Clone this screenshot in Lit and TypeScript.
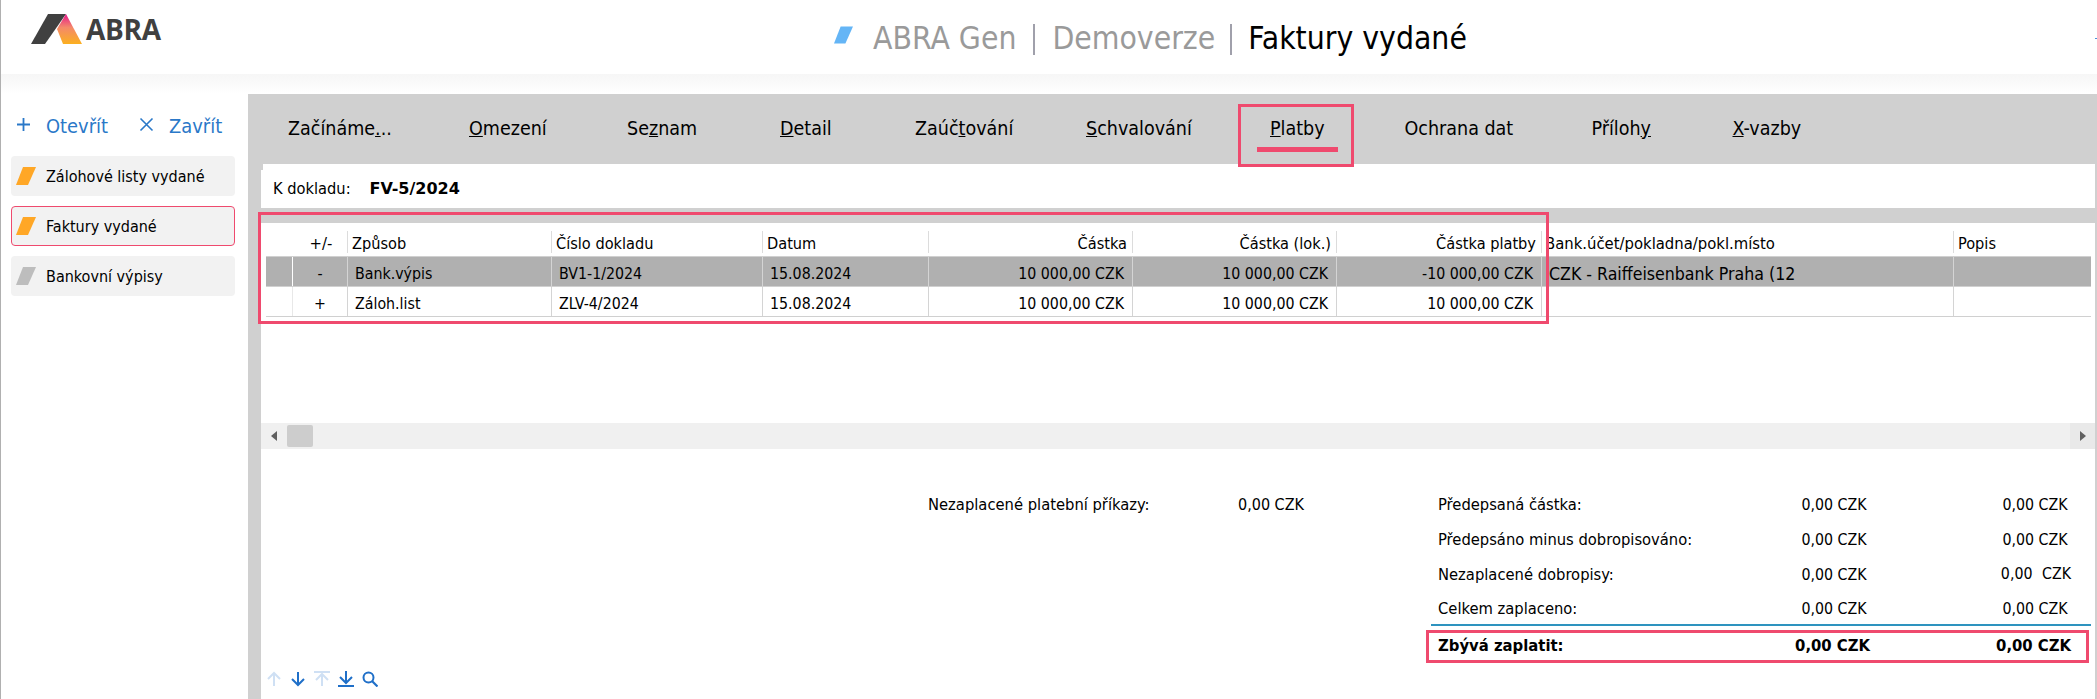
import { LitElement, html, css, svg } from "lit";
import { customElement } from "lit/decorators.js";

const tabs: [any, number][] = [
  [html`Začínáme<u>.</u>..`, 181],
  [html`<u>O</u>mezení`, 158],
  [html`Se<u>z</u>nam`, 153],
  [html`<u>D</u>etail`, 135],
  [html`Zaúč<u>t</u>ování`, 171],
  [html`<u>S</u>chvalování`, 184],
  [html`<u>P</u>latby`, 134.5],
  [html`Ochrana dat`, 187],
  [html`Příloh<u>y</u>`, 141],
  [html`<u>X</u>-vazby`, 100],
];

const heads = [
  ["", "c"], ["+/-", "c"], ["Způsob", ""], ["Číslo dokladu", ""], ["Datum", ""],
  ["Částka", "r"], ["Částka (lok.)", "r"], ["Částka platby", "r"],
  ["Bank.účet/pokladna/pokl.místo", ""], ["Popis", ""],
];
const rows = [
  { sel: true, cells: ["", "-", "Bank.výpis", "BV1-1/2024", "15.08.2024", "10 000,00 CZK", "10 000,00 CZK", "-10 000,00 CZK", "CZK - Raiffeisenbank Praha (12", ""] },
  { sel: false, cells: ["", "+", "Záloh.list", "ZLV-4/2024", "15.08.2024", "10 000,00 CZK", "10 000,00 CZK", "10 000,00 CZK", "", ""] },
];
const align = ["c", "c", "", "", "", "r", "r", "r", "bank", ""];

const para = (color: string, cls: string) => html`<svg class=${cls} viewBox="0 0 20 18"><polygon points="7,0 20,0 12,18 0,18" fill=${color}></polygon></svg>`;

@customElement("app-root")
export class AppRoot extends LitElement {
  static styles = css`
    :host {
      display: flex; flex-direction: column; width: 2097px; height: 699px; overflow: hidden; box-sizing: border-box;
      border-left: 1px solid #b0b0b0; background: #fff; color: #000;
      font-family: "DejaVu Sans", sans-serif; font-stretch: condensed; font-size: 16px; line-height: 20px;
    }
    .header { height: 74px; display: flex; flex: none; }
    .logo { display: flex; width: 247px; padding: 14px 0 0 30px; box-sizing: border-box; align-items: flex-start; }
    .logo svg { width: 52px; height: 30px; display: block; }
    .logo span { font-family: "Open Sans", sans-serif; font-stretch: normal; font-weight: 700; font-size: 28px; line-height: 30px; color: #404040; margin-left: 3px; letter-spacing: -0.3px; }
    .title { display: flex; align-items: center; margin-left: 586px; height: 76px; font-size: 31.6px; color: #9a9a9a; white-space: nowrap; }
    .title .mark { width: 19px; height: 18px; margin-right: 20px; margin-top: -6px; }
    .title .sep { width: 2px; height: 31px; background: #a0a0ab; margin: 2px 17px 0 17px; }
    .title .sep.b { margin: 2px 16px 0 15px; }
    .title .cur { color: #000; }
    .edge { position: absolute; left: 2095px; top: 38px; width: 2px; height: 1px; background: #4a90d9; }
    .fade { height: 20px; flex: none; background: linear-gradient(#f6f6f6, #fff); }
    .body { flex: 1; display: flex; min-height: 0; }
    .side { width: 247px; flex: none; padding: 21px 0 0 10px; box-sizing: border-box; }
    .actions { display: flex; height: 24px; align-items: center; color: #2a78c8; font-size: 19.9px; }
    .actions svg { width: 15px; height: 15px; flex: none; margin-top: -5px; }
    .actions .open { margin-left: 5px; }
    .actions .close { margin-left: 31px; }
    .actions span { margin-left: 15px; }
    .card { width: 224px; height: 40px; box-sizing: border-box; background: #f2f2f2; border-radius: 4px; display: flex; align-items: center; padding: 2px 0 0 5px; margin-bottom: 10px; }
    .card.first { margin-top: 17px; }
    .card.on { border: 1px solid #ef4a6e; padding: 2px 0 0 4px; }
    .card svg { width: 20px; height: 18px; flex: none; margin-right: 10px; margin-top: -2px; }
    .main { flex: 1; background: #d0d0d0; display: flex; flex-direction: column; padding-right: 2px; min-width: 0; }
    .tabs { height: 70px; flex: none; display: flex; padding: 25px 0 0 40px; box-sizing: border-box; position: relative; font-size: 19.5px; }
    .tab { flex: none; white-space: nowrap; }
    .tabbox { position: absolute; left: 990px; top: 10px; width: 116px; height: 63px; box-sizing: border-box; border: 3px solid #ef4a6e; z-index: 2; }
    .tabbox i { display: block; position: absolute; left: 16px; top: 40px; width: 81px; height: 5px; background: #ef4a6e; }
    .doc { height: 44px; flex: none; margin-left: 13px; background: #fff; display: flex; align-items: center; padding: 6px 0 0 12px; box-sizing: border-box; position: relative; font-size: 16.3px; }
    .doc::before { content: ""; position: absolute; left: 0; top: 0; width: 2px; height: 6px; background: #d0d0d0; }
    .doc b { margin-left: 19px; font-weight: 700; font-stretch: normal; font-size: 16px; }
    .panel { flex: 1; margin: 15px 0 0 13px; background: #fff; display: flex; flex-direction: column; position: relative; min-height: 0; }
    .tablebox { position: absolute; left: -3px; top: -11px; width: 1291px; height: 112px; box-sizing: border-box; border: 3px solid #ef4a6e; z-index: 2; pointer-events: none; }
    .table { margin-left: 5px; width: 1825px; flex: none; }
    .tr { display: grid; grid-template-columns: 26px 55px 204px 211px 166px 204px 204px 205px 412px 138px; }
    .thead { height: 34px; box-sizing: border-box; border-bottom: 1px solid #d0d0d0; font-size: 16.2px; }
    .th { margin-top: 8px; height: 22px; line-height: 25px; padding: 0 5px 0 4px; box-sizing: border-box; white-space: nowrap; border-left: 1px solid #dcdcdc; overflow: visible; }
    .th:first-child, .th:nth-child(2) { border-left: 0; }
    .th.c { text-align: center; padding-right: 1px; font-size: 16.5px; }
    .th.r { text-align: right; }
    .th.bank { padding-left: 3px; font-size: 16.5px; }
    .row { height: 30px; box-sizing: border-box; border-bottom: 1px solid #d0d0d0; font-size: 15.8px; }
    .row.sel { background: #b0b0b0; }
    .td { line-height: 28px; padding: 3px 8px 0 7px; white-space: nowrap; overflow: hidden; border-left: 1px solid #d4d4d4; box-sizing: border-box; }
    .td:first-child { border-left: 0; }
    .td:nth-child(2) { border-left: 1px solid #fff; padding: 3px 0 0; }
    .row:not(.sel) .td:nth-child(2) { border-left-color: #e8e8e8; }
    .td.c { text-align: center; }
    .td.r { text-align: right; }
    .td.bank { font-size: 17.6px; padding-left: 7px; }
    .scroll { margin-top: 106px; height: 26px; flex: none; background: #f0f0f0; display: flex; align-items: center; }
    .scroll .btn { width: 26px; height: 26px; display: flex; align-items: center; justify-content: center; flex: none; }
    .scroll .btn.next { background: #e9e9e9; margin-left: auto; width: 25px; }
    .scroll .thumb { width: 26px; height: 22px; background: #cdcdcd; border-radius: 2px; flex: none; }
    .scroll svg { width: 6px; height: 10px; }
    .summary { flex: 1; display: flex; min-height: 0; }
    .left { width: 1165px; flex: none; display: flex; flex-direction: column; }
    .unpaid { margin: 37px 0 0 667px; height: 35px; padding-top: 2px; box-sizing: border-box; display: grid; grid-template-columns: 310px 66px; align-items: center; white-space: nowrap; font-size: 16.4px; }
    .unpaid .v { font-size: 16px; }
    .nav { margin-top: auto; padding: 0 0 12px 5px; display: flex; align-items: center; height: 16px; }
    .nav svg { width: 16px; height: 16px; display: block; margin-right: 8px; flex: none; }
    .sumright { width: 665px; flex: none; padding-top: 37px; box-sizing: border-box; }
    .s { display: grid; grid-template-columns: 1fr 120px 201px; height: 35px; box-sizing: border-box; padding: 2px 23.5px 0 12px; align-items: center; white-space: nowrap; font-size: 16.4px; }
    .s .v { text-align: right; white-space: pre; font-size: 15.8px; }
    .s.last { height: 33px; padding-top: 3px; }
    .odd { display: inline-block; margin: 0 -3.5px 2px 5px; }
    .line { height: 2px; margin-left: 5px; background: #2e93bf; }
    .total { margin-top: 4px; width: 663px; height: 33px; box-sizing: border-box; border: 3px solid #ef4a6e; display: grid; grid-template-columns: 1fr 120px 201px; align-items: center; padding: 0 15px 2px 9px; font-weight: 700; white-space: nowrap; font-size: 16.5px; }
    .total .v { text-align: right; }
  `;

  render() {
    return html`
      <div class="header">
        <div class="logo">
          <svg viewBox="0 0 52 30">
            <defs><linearGradient id="g" x1="0" y1="0" x2="0" y2="1"><stop offset="0" stop-color="#e6178c"></stop><stop offset="0.45" stop-color="#f4896a"></stop><stop offset="1" stop-color="#fbb020"></stop></linearGradient></defs>
            <polygon points="0,30 17,0 35,0 14,30" fill="#404040"></polygon>
            <polygon points="35,0 51,30 32,30 26,15" fill="url(#g)"></polygon>
          </svg>
          <span>ABRA</span>
        </div>
        <div class="title">
          ${para("#64b5f6", "mark")}
          <span>ABRA Gen</span><span class="sep"></span><span>Demoverze</span><span class="sep b"></span><span class="cur">Faktury vydané</span>
        </div>
        <div class="edge"></div>
      </div>
      <div class="fade"></div>
      <div class="body">
        <div class="side">
          <div class="actions">
            <svg class="open" viewBox="0 0 15 15"><path d="M7.5 1v13M1 7.5h13" stroke="#2a78c8" stroke-width="1.8" fill="none"></path></svg>
            <span>Otevřít</span>
            <svg class="close" viewBox="0 0 15 15"><path d="M1.5 1.5l12 12M13.5 1.5l-12 12" stroke="#2a78c8" stroke-width="1.6" fill="none"></path></svg>
            <span>Zavřít</span>
          </div>
          <div class="card first">${para("#ffa726", "")}Zálohové listy vydané</div>
          <div class="card on">${para("#ffa726", "")}Faktury vydané</div>
          <div class="card">${para("#bdbdbd", "")}Bankovní výpisy</div>
        </div>
        <div class="main">
          <div class="tabs">
            ${tabs.map(([t, w]) => html`<div class="tab" style="width:${w}px">${t}</div>`)}
            <div class="tabbox"><i></i></div>
          </div>
          <div class="doc">K dokladu:<b>FV-5/2024</b></div>
          <div class="panel">
            <div class="tablebox"></div>
            <div class="table">
              <div class="tr thead">
                ${heads.map(([t, a], i) => html`<div class="th ${a} ${i === 8 ? "bank" : ""}">${t}</div>`)}
              </div>
              ${rows.map((r) => html`<div class="tr row ${r.sel ? "sel" : ""}">
                ${r.cells.map((c, i) => html`<div class="td ${align[i]}">${c}</div>`)}
              </div>`)}
            </div>
            <div class="scroll">
              <div class="btn"><svg viewBox="0 0 6 10"><polygon points="6,0 6,10 0,5" fill="#606060"></polygon></svg></div>
              <div class="thumb"></div>
              <div class="btn next"><svg viewBox="0 0 6 10"><polygon points="0,0 0,10 6,5" fill="#606060"></polygon></svg></div>
            </div>
            <div class="summary">
              <div class="left">
                <div class="unpaid"><span>Nezaplacené platební příkazy:</span><span class="v">0,00 CZK</span></div>
                <div class="nav">
                  ${svg`<svg viewBox="0 0 16 16"><path d="M8 15V2M2 8l6-6 6 6" stroke="#cfe0f4" stroke-width="2" fill="none"></path></svg>
                  <svg viewBox="0 0 16 16"><path d="M8 1v13M2 8l6 6 6-6" stroke="#1f6fc8" stroke-width="2" fill="none"></path></svg>
                  <svg viewBox="0 0 16 16"><path d="M0 1h16M8 15V4M2 9l6-6 6 6" stroke="#cfe0f4" stroke-width="2" fill="none"></path></svg>
                  <svg viewBox="0 0 16 16"><path d="M8 0v11M2 6l6 6 6-6M0 15h16" stroke="#1f6fc8" stroke-width="2" fill="none"></path></svg>
                  <svg viewBox="0 0 16 16"><circle cx="6.5" cy="6.5" r="5" stroke="#1f6fc8" stroke-width="2" fill="none"></circle><path d="M10 10l5.5 5.5" stroke="#1f6fc8" stroke-width="2.2" fill="none"></path></svg>`}
                </div>
              </div>
              <div class="sumright">
                <div class="s"><span>Předepsaná částka:</span><span class="v">0,00 CZK</span><span class="v">0,00 CZK</span></div>
                <div class="s"><span>Předepsáno minus dobropisováno:</span><span class="v">0,00 CZK</span><span class="v">0,00 CZK</span></div>
                <div class="s"><span>Nezaplacené dobropisy:</span><span class="v">0,00 CZK</span><span class="v">0,00<span class="odd"> CZK</span></span></div>
                <div class="s last"><span>Celkem zaplaceno:</span><span class="v">0,00 CZK</span><span class="v">0,00 CZK</span></div>
                <div class="line"></div>
                <div class="total"><span>Zbývá zaplatit:</span><span class="v">0,00 CZK</span><span class="v">0,00 CZK</span></div>
              </div>
            </div>
          </div>
        </div>
      </div>
    `;
  }
}
